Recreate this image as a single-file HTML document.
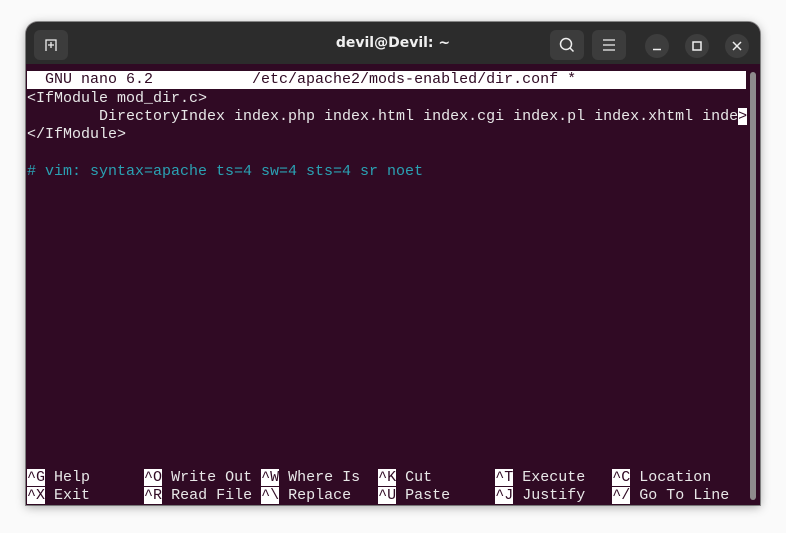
<!DOCTYPE html>
<html><head><meta charset="utf-8"><style>
html,body{margin:0;padding:0;width:786px;height:533px;background:#fafafa;overflow:hidden}
.win{position:absolute;left:26px;top:22px;width:734px;height:483px;border-radius:12px 12px 0 0;background:#300a24;overflow:hidden;box-shadow:0 2px 10px rgba(0,0,0,.35),0 0 0 1px rgba(0,0,0,.4)}
.hdr{position:absolute;left:0;top:0;width:734px;height:42px;background:#2c2c2c}
.btn{position:absolute;top:8px;width:34px;height:30px;border-radius:6px;background:#3c3c3c}
.cbtn{position:absolute;top:12px;width:24px;height:24px;border-radius:50%;background:#3d3d3d}
.title{position:absolute;left:0;right:0;top:13px;text-align:center;color:#f0f0f0;font:bold 14px "DejaVu Sans","Liberation Sans",sans-serif}
.term{position:absolute;left:1px;top:50px;font:15px/18px "Liberation Mono",monospace;color:#e8e8e8;white-space:pre}
.row{position:absolute;left:0;height:18px;white-space:pre}
.inv{background:#fff;color:#300a24}
.cm{color:#2aa1b3}
.sb{position:absolute;left:724px;top:50px;width:6px;height:428px;border-radius:3px;background:#8e8a8c}
</style></head><body>
<div class="win">
 <div class="hdr">
  <div class="btn" style="left:8px"><svg width="34" height="30"><path d="M12 21V10h10v11M17 12v6M14 15h6" stroke="#eee" stroke-width="1.3" fill="none"/></svg></div>
  <div class="title">devil@Devil: ~</div>
  <div class="btn" style="left:524px"><svg width="34" height="30"><circle cx="16" cy="14" r="5.5" stroke="#eee" stroke-width="1.5" fill="none"/><path d="M20 18l3.5 3.5" stroke="#eee" stroke-width="1.5"/></svg></div>
  <div class="btn" style="left:566px"><svg width="34" height="30"><path d="M11 10h12M11 15h12M11 20h12" stroke="#eee" stroke-width="1.3"/></svg></div>
  <div class="cbtn" style="left:619px"><svg width="24" height="24"><path d="M8 15.5h8" stroke="#eee" stroke-width="1.5"/></svg></div>
  <div class="cbtn" style="left:659px"><svg width="24" height="24"><rect x="8" y="8" width="8" height="8" stroke="#eee" stroke-width="1.5" fill="none"/></svg></div>
  <div class="cbtn" style="left:699px"><svg width="24" height="24"><path d="M8 8l8 8M16 8l-8 8" stroke="#eee" stroke-width="1.5"/></svg></div>
 </div>
 <div class="term">
  <div class="row inv" style="top:-1px;width:719px">  GNU nano 6.2           /etc/apache2/mods-enabled/dir.conf *                     </div>
  <div class="row" style="top:18px">&lt;IfModule mod_dir.c&gt;</div>
  <div class="row" style="top:36px">        DirectoryIndex index.php index.html index.cgi index.pl index.xhtml inde<span class="inv">&gt;</span></div>
  <div class="row" style="top:54px">&lt;/IfModule&gt;</div>
  <div class="row cm" style="top:91px"># vim: syntax=apache ts=4 sw=4 sts=4 sr noet</div>
  <div class="row" style="top:397px"><span class="inv">^G</span> Help      <span class="inv">^O</span> Write Out <span class="inv">^W</span> Where Is  <span class="inv">^K</span> Cut       <span class="inv">^T</span> Execute   <span class="inv">^C</span> Location</div>
  <div class="row" style="top:415px"><span class="inv">^X</span> Exit      <span class="inv">^R</span> Read File <span class="inv">^\</span> Replace   <span class="inv">^U</span> Paste     <span class="inv">^J</span> Justify   <span class="inv">^/</span> Go To Line</div>
 </div>
 <div class="sb"></div>
</div>
</body></html>
